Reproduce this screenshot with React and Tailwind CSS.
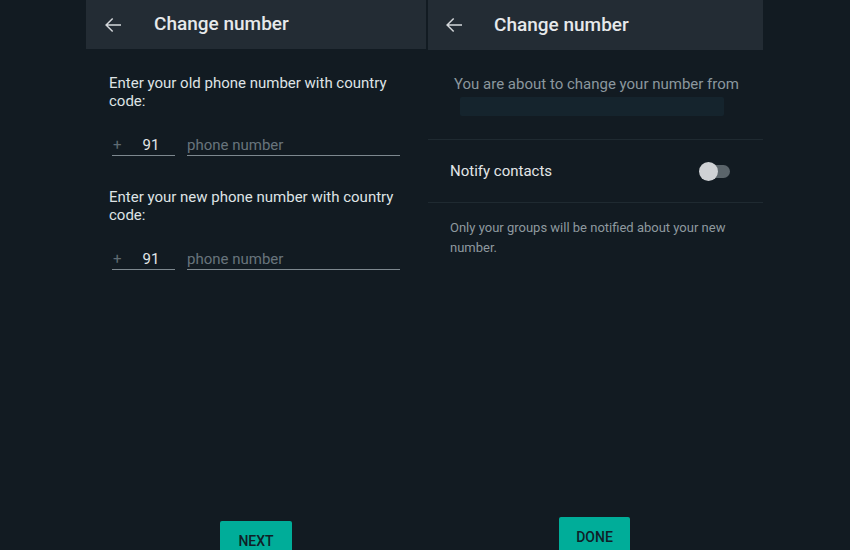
import React from "react";

function Back() {
  return (
    <svg width="24" height="24" viewBox="0 0 24 24" className="shrink-0">
      <path d="M20 11.25H6.9l5.3-5.3-1.05-1.05L4.05 12l7.1 7.1 1.05-1.05-5.3-5.3H20z" fill="#d3d7da" />
    </svg>
  );
}

function PhoneRow() {
  return (
    <div className="flex items-end gap-[12px] h-[22px]">
      <div className="w-[63px] h-full flex items-start pt-[2px] border-b border-[#7d888f] text-[15px] leading-[18px]">
        <span className="text-[#5f6b73] ml-[1px]">+</span>
        <span className="text-[#e2e6e8] ml-[21px]">91</span>
      </div>
      <div className="w-[213px] h-full flex items-start pt-[2px] border-b border-[#7d888f] text-[15px] leading-[18px] text-[#68747c]">
        phone number
      </div>
    </div>
  );
}

export default function App() {
  return (
    <div
      className="w-[850px] h-[550px] bg-[#121b22] flex overflow-hidden"
      style={{ fontFamily: "Roboto, 'Noto Sans', sans-serif" }}
    >
      <div className="w-[86px] shrink-0" />
      {/* Left panel */}
      <div className="w-[340px] shrink-0 h-[550px] flex flex-col">
        <div className="h-[49px] bg-[#232c34] flex items-center pl-[15px] gap-[29px] shrink-0">
          <Back />
          <span className="text-[19px] font-medium text-[#e6e9eb] leading-[24px] -mt-[1px]">Change number</span>
        </div>
        <div className="pl-[23px] pt-[25px] flex flex-col">
          <p className="w-[292px] text-[15px] leading-[18px] text-[#dfe3e5]">
            Enter your old phone number with country code:
          </p>
          <div className="mt-[24px] pl-[3px]">
            <PhoneRow />
          </div>
          <p className="mt-[32px] w-[292px] text-[15px] leading-[18px] text-[#dfe3e5]">
            Enter your new phone number with country code:
          </p>
          <div className="mt-[24px] pl-[3px]">
            <PhoneRow />
          </div>
        </div>
        <div className="flex-1" />
        <div className="pl-[134px] -mb-[8px] shrink-0">
          <button className="w-[72px] h-[37px] bg-[#00ad99] rounded-[2px] pt-[12px] flex justify-center items-start text-[14px] leading-[16px] font-medium text-[#102027]">
            NEXT
          </button>
        </div>
      </div>
      <div className="w-[2px] shrink-0 bg-[#121b22]" />
      {/* Right panel */}
      <div className="w-[335px] shrink-0 h-[550px] flex flex-col">
        <div className="h-[50px] bg-[#232c34] flex items-center pl-[14px] gap-[28px] shrink-0">
          <Back />
          <span className="text-[19px] font-medium text-[#e6e9eb] leading-[24px]">Change number</span>
        </div>
        <div className="pl-[26px] pt-[25px] text-[15px] leading-[18px] text-[#8b979e]">
          You are about to change your number from
        </div>
        <div className="ml-[32px] mt-[4px] w-[264px] h-[19px] bg-[#15242d] rounded-[2px]" />
        <div className="mt-[23px] h-px bg-[#1f2a31]" />
        <div className="h-[62px] flex items-center justify-between pl-[22px] pr-[33px]">
          <span className="text-[15px] leading-[18px] text-[#e2e6e8]">Notify contacts</span>
          <div className="relative w-[31px] h-[20px] flex items-center">
            <div className="absolute left-[9px] w-[22px] h-[13px] rounded-full bg-[#5a646a]" />
            <div className="absolute left-0 w-[19px] h-[19px] rounded-full bg-[#cfd2d5]" />
          </div>
        </div>
        <div className="h-px bg-[#1f2a31]" />
        <p className="pl-[22px] pt-[15px] w-[310px] text-[13px] leading-[20px] text-[#8e999f]">
          Only your groups will be notified about your new number.
        </p>
        <div className="flex-1" />
        <div className="pl-[131px] -mb-[4px] shrink-0">
          <button className="w-[71px] h-[37px] bg-[#00ad99] rounded-[2px] pt-[12px] flex justify-center items-start text-[14px] leading-[16px] font-medium text-[#102027]">
            DONE
          </button>
        </div>
      </div>
    </div>
  );
}
